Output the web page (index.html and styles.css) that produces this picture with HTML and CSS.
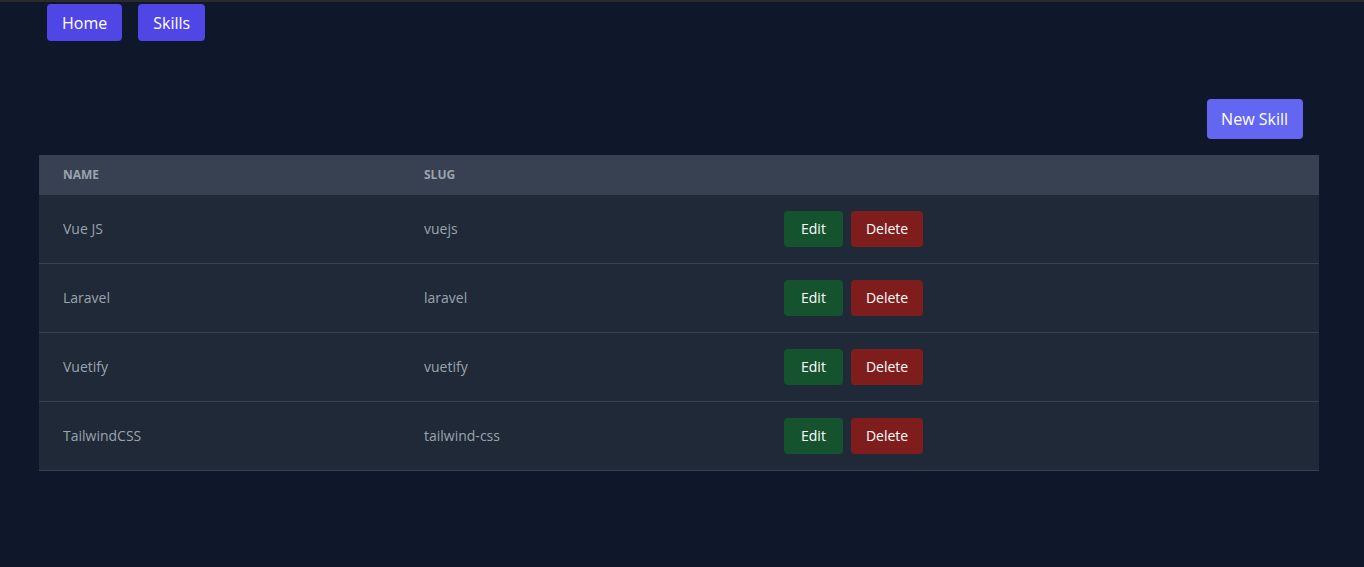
FILE: index.html
```html
<!DOCTYPE html>
<html lang="en">
<head>
<meta charset="utf-8">
<title>Skills</title>
<link rel="stylesheet" href="styles.css">
</head>
<body>
<div class="topline"></div>
<nav class="nav">
  <a class="nav-btn" href="#">Home</a>
  <a class="nav-btn" href="#">Skills</a>
</nav>
<main class="main">
  <div class="toolbar">
    <a class="new-btn" href="#">New Skill</a>
  </div>
  <table class="table">
    <thead>
      <tr>
        <th class="col-name">Name</th>
        <th class="col-slug">Slug</th>
        <th></th>
      </tr>
    </thead>
    <tbody>
      <tr>
        <td>Vue JS</td>
        <td>vuejs</td>
        <td><div class="actions"><a class="btn btn-edit" href="#">Edit</a><a class="btn btn-delete" href="#">Delete</a></div></td>
      </tr>
      <tr>
        <td>Laravel</td>
        <td>laravel</td>
        <td><div class="actions"><a class="btn btn-edit" href="#">Edit</a><a class="btn btn-delete" href="#">Delete</a></div></td>
      </tr>
      <tr>
        <td>Vuetify</td>
        <td>vuetify</td>
        <td><div class="actions"><a class="btn btn-edit" href="#">Edit</a><a class="btn btn-delete" href="#">Delete</a></div></td>
      </tr>
      <tr>
        <td>TailwindCSS</td>
        <td>tailwind-css</td>
        <td><div class="actions"><a class="btn btn-edit" href="#">Edit</a><a class="btn btn-delete" href="#">Delete</a></div></td>
      </tr>
    </tbody>
  </table>
</main>
</body>
</html>
```
FILE: styles.css
```css
* { box-sizing: border-box; }
html, body { margin: 0; padding: 0; }
body {
  background: #0f172a;
  font-family: "Open Sans", "Noto Sans", sans-serif;
  color: #9ca3af;
  min-height: 567px;
}
a { text-decoration: none; }
.topline { height: 2px; background: #2b2b2e; }
.nav {
  display: flex;
  gap: 16px;
  padding: 2px 0 0 47px;
}
.nav-btn {
  display: block;
  background: #4f46e5;
  color: #fff;
  font-size: 16px;
  line-height: 21px;
  padding: 9px 15px 7px;
  border-radius: 4px;
}
.main {
  padding: 58px 45px 0 39px;
}
.toolbar {
  display: flex;
  justify-content: flex-end;
  padding-right: 16px;
  margin-bottom: 16px;
}
.new-btn {
  display: block;
  background: #6366f1;
  color: #fff;
  font-size: 16px;
  line-height: 22px;
  padding: 9px 15px 9px 14px;
  border-radius: 4px;
}
.table {
  width: 100%;
  border-collapse: collapse;
  table-layout: fixed;
}
.table th {
  background: #374151;
  text-align: left;
  font-size: 12px;
  line-height: 16px;
  font-weight: 700;
  text-transform: uppercase;
  color: #9ca3af;
  padding: 12px 24px;
}
.col-name { width: 361px; }
.col-slug { width: 360px; }
.table td {
  background: #1f2937;
  font-size: 14px;
  line-height: 20px;
  padding: 16px 24px;
  border-bottom: 1px solid #374151;
  color: #9ca3af;
}
.actions { display: flex; gap: 8px; }
.btn {
  display: block;
  color: #fff;
  font-size: 14px;
  line-height: 20px;
  padding: 8px 16px;
  border-radius: 4px;
}
.btn-edit { background: #14532d; padding: 8px 17px; }
.btn-delete { background: #7f1d1d; padding: 8px 15px; }
```
